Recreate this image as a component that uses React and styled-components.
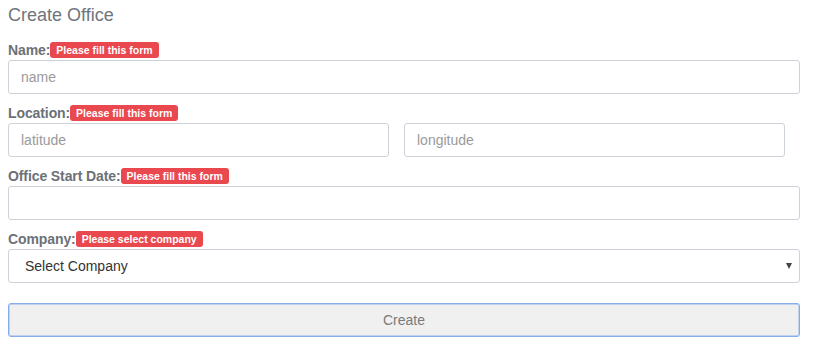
import React from "react";
import styled, { createGlobalStyle } from "styled-components";

const GlobalStyle = createGlobalStyle`
  body {
    margin: 0;
    background: #ffffff;
    font-family: "Liberation Sans", Arial, sans-serif;
  }
`;

const fields = [
  { label: "Name:", badge: "Please fill this form", placeholder: "name" },
];

function App() {
  return (
    <>
      <GlobalStyle />
      <Page>
        <Title>Create Office</Title>

        {fields.map((f) => (
          <Group key={f.label}>
            <LabelRow>
              <Label>{f.label}</Label>
              <Badge>{f.badge}</Badge>
            </LabelRow>
            <Input placeholder={f.placeholder} />
          </Group>
        ))}

        <Group>
          <LabelRow>
            <Label>Location:</Label>
            <Badge>Please fill this form</Badge>
          </LabelRow>
          <Pair>
            <Input placeholder="latitude" />
            <Input placeholder="longitude" />
          </Pair>
        </Group>

        <Group>
          <LabelRow>
            <Label>Office Start Date:</Label>
            <Badge>Please fill this form</Badge>
          </LabelRow>
          <Input />
        </Group>

        <Group>
          <LabelRow>
            <Label>Company:</Label>
            <Badge>Please select company</Badge>
          </LabelRow>
          <SelectWrap>
            <Select defaultValue="">
              <option value="">Select Company</option>
            </Select>
            <Caret />
          </SelectWrap>
        </Group>

        <SubmitButton type="button">Create</SubmitButton>
      </Page>
    </>
  );
}

export default App;

const Page = styled.div`
  width: 792px;
  padding: 4px 8px;
  display: flex;
  flex-direction: column;
`;

const Title = styled.h2`
  margin: 0 0 15px;
  font-size: 18px;
  line-height: 22px;
  font-weight: normal;
  color: #6f757c;
`;

const Group = styled.div`
  display: flex;
  flex-direction: column;
  margin-bottom: 10px;
`;

const LabelRow = styled.div`
  display: flex;
  align-items: center;
  height: 18px;
  margin-bottom: 1px;
`;

const Label = styled.span`
  font-size: 14px;
  font-weight: bold;
  color: #6c7177;
  margin-right: 0;
  letter-spacing: -0.1px;
`;

const Badge = styled.span`
  display: inline-block;
  height: 16px;
  line-height: 16px;
  padding: 0 6px;
  border-radius: 3px;
  background: #e9484e;
  color: #ffffff;
  font-size: 10.5px;
  font-weight: bold;
`;

const Input = styled.input`
  box-sizing: border-box;
  width: 100%;
  height: 34px;
  padding: 0 12px;
  border: 1px solid #cdd3d9;
  border-radius: 3px;
  font-family: "Liberation Sans", Arial, sans-serif;
  font-size: 14px;
  color: #333;
  outline: none;

  &::placeholder {
    color: #9a9a9a;
  }
`;

const Pair = styled.div`
  display: grid;
  grid-template-columns: 1fr 1fr;
  column-gap: 15px;
  padding-right: 15px;
`;

const SelectWrap = styled.div`
  position: relative;
`;

const Select = styled.select`
  box-sizing: border-box;
  width: 100%;
  height: 34px;
  padding: 0 16px;
  border: 1px solid #cdd3d9;
  border-radius: 3px;
  background: #ffffff;
  font-family: "Liberation Sans", Arial, sans-serif;
  font-size: 14px;
  color: #333;
  appearance: none;
  outline: none;
`;

const Caret = styled.span`
  position: absolute;
  right: 8px;
  top: 14px;
  width: 0;
  height: 0;
  border-left: 3.5px solid transparent;
  border-right: 3.5px solid transparent;
  border-top: 6px solid #444;
`;

const SubmitButton = styled.button`
  margin-top: 10px;
  width: 100%;
  height: 34px;
  border: 1px solid #86aee6;
  box-shadow: inset 0 0 0 1px rgba(134, 174, 230, 0.45);
  border-radius: 3px;
  background: #f0f0f0;
  color: #7a7a7a;
  font-family: "Liberation Sans", Arial, sans-serif;
  font-size: 14px;
`;
